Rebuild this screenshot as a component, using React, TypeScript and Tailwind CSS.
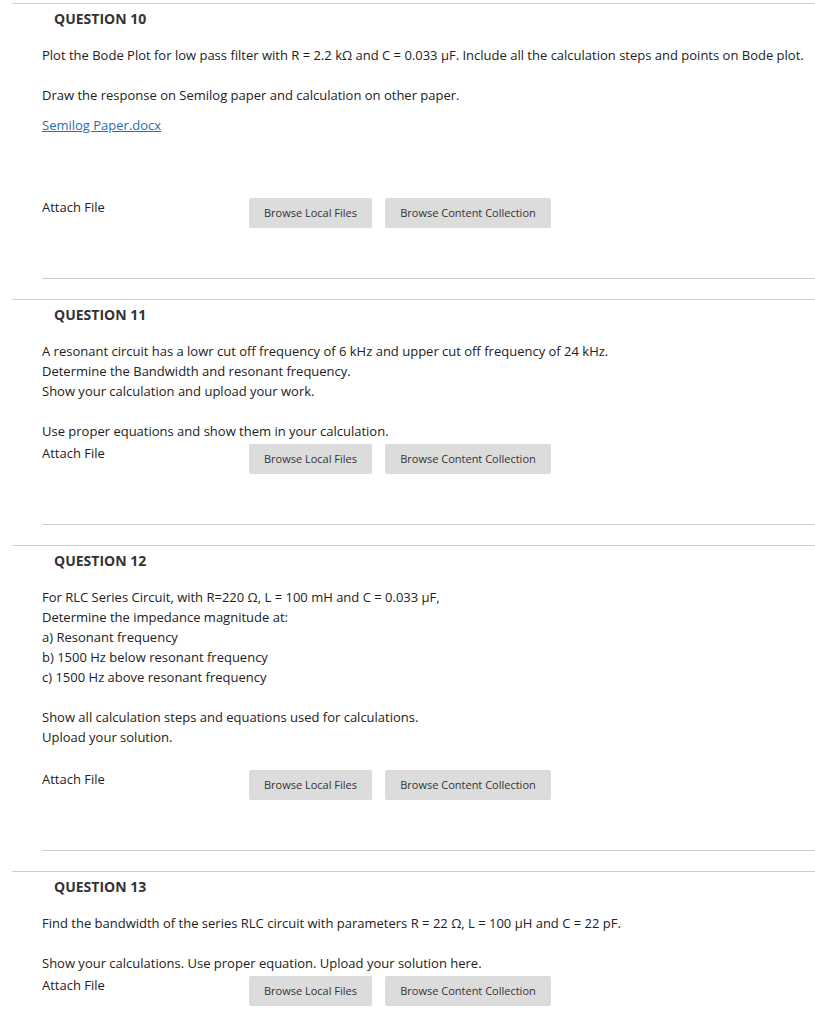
import React from "react";

// Bloque de adjuntar archivo con los dos botones grises
function AttachRow() {
  return (
    <div className="flex items-start">
      <span className="w-[207px] pt-[2px]">Attach File</span>
      <div className="mt-[3px] flex gap-[13px]">
        <button className="h-[30px] w-[123px] rounded-[2px] bg-[#dcdcdc] text-[11px] text-[#333]">
          Browse Local Files
        </button>
        <button className="h-[30px] w-[166px] rounded-[2px] bg-[#dcdcdc] text-[11px] text-[#333]">
          Browse Content Collection
        </button>
      </div>
    </div>
  );
}

function Question({
  title,
  children,
  last,
}: {
  title: string;
  children: React.ReactNode;
  last?: boolean;
}) {
  return (
    <section className="ml-[12px] border-t border-[#cfcfcf]">
      <h2 className="pl-[42px] pt-[5px] text-[14px] font-bold leading-[20px] text-[#333]">
        {title}
      </h2>
      <div className="mt-[16px] pl-[30px]">{children}</div>
      {!last && (
        <>
          <div className="ml-[30px] mt-[50px] border-t border-[#cfcfcf]" />
          <div className="h-[20px]" />
        </>
      )}
    </section>
  );
}

export default function App() {
  return (
    <div className="min-h-[1016px] bg-white pt-[3px] font-['Open_Sans',sans-serif] text-[13px] leading-[20px] text-[#222]">
      {/* PREGUNTA 10 */}
      <Question title="QUESTION 10">
        <p>
          Plot the Bode Plot for low pass filter with R = 2.2 kΩ and C = 0.033
          μF. Include all the calculation steps and points on Bode plot.
        </p>
        <p className="mt-[20px]">
          Draw the response on Semilog paper and calculation on other paper.
        </p>
        <a href="#" className="mt-[10px] block w-fit text-[#2a6db0] underline">
          Semilog Paper.docx
        </a>
        <div className="mt-[60px]">
          <AttachRow />
        </div>
      </Question>

      {/* PREGUNTA 11 */}
      <Question title="QUESTION 11">
        <p>
          A resonant circuit has a lowr cut off frequency of 6 kHz and upper cut
          off frequency of 24 kHz.
          <br />
          Determine the Bandwidth and resonant frequency.
          <br />
          Show your calculation and upload your work.
        </p>
        <p className="mt-[20px]">
          Use proper equations and show them in your calculation.
        </p>
        <AttachRow />
      </Question>

      {/* PREGUNTA 12 */}
      <Question title="QUESTION 12">
        <p>
          For RLC Series Circuit, with R=220 Ω, L = 100 mH and C = 0.033 μF,
          <br />
          Determine the impedance magnitude at:
          <br />
          a) Resonant frequency
          <br />
          b) 1500 Hz below resonant frequency
          <br />
          c) 1500 Hz above resonant frequency
        </p>
        <p className="mt-[20px]">
          Show all calculation steps and equations used for calculations.
          <br />
          Upload your solution.
        </p>
        <div className="mt-[20px]">
          <AttachRow />
        </div>
      </Question>

      {/* PREGUNTA 13 */}
      <Question title="QUESTION 13" last>
        <p>
          Find the bandwidth of the series RLC circuit with parameters R = 22 Ω,
          L = 100 μH and C = 22 pF.
        </p>
        <p className="mt-[20px]">
          Show your calculations. Use proper equation. Upload your solution
          here.
        </p>
        <AttachRow />
      </Question>
    </div>
  );
}
